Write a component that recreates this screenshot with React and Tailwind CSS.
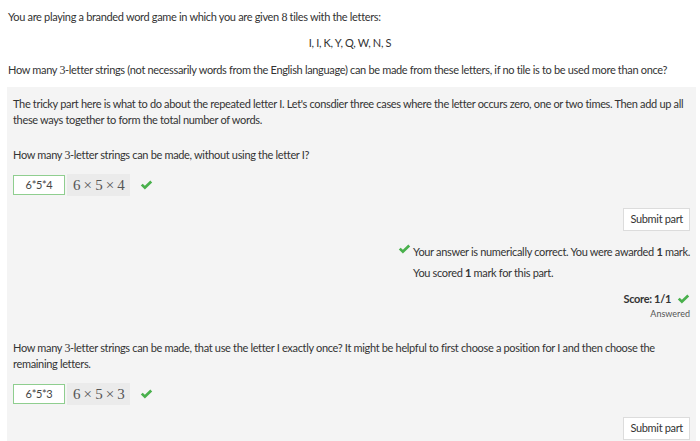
const Check = ({ className = '' }) => (
  <svg viewBox="0 0 16 12" className={className} aria-hidden="true">
    <path d="M1 6.6 L3.3 4.4 L6 7 L12.7 0.6 L15 2.8 L6 11.4 Z" fill="#49b04c" />
  </svg>
);

const AnswerRow = ({ raw, math }) => (
  <div className="flex items-center">
    <div className="w-[52px] h-[20px] border border-[#8fce8f] bg-white text-[11px] text-[#444] flex items-center justify-center">
      {raw}
    </div>
    <div className="ml-[2px] h-[22px] px-[6px] bg-[#ebebeb] flex items-center text-[15px] text-[#555] font-['Liberation_Serif',serif]">
      {math}
    </div>
    <Check className="ml-[10px] w-[13px] h-[10px]" />
  </div>
);

const SubmitButton = () => (
  <div className="flex justify-end">
    <button className="h-[23px] px-[6px] bg-white border border-[#dcdcdc] text-[11px] text-[#333]">
      Submit part
    </button>
  </div>
);

export default function App() {
  return (
    <div className="w-[700px] h-[441px] overflow-hidden bg-white text-[#333] text-[11px] tracking-[-0.33px] font-['Lato',sans-serif]">
      <div className="px-[8px] pt-[10px]">
        <p className="leading-[14px]">
          You are playing a branded word game in which you are given <span className="font-['Liberation_Serif',serif] text-[12px]">8</span> tiles with the letters:
        </p>
        <p className="mt-[12px] text-center leading-[14px]">I, I, K, Y, Q, W, N, S</p>
        <p className="mt-[13px] leading-[14px]">
          How many <span className="font-['Liberation_Serif',serif] text-[12px]">3</span>-letter strings (not necessarily words from the English language) can be made from these letters, if no tile is to be used more than once?
        </p>
      </div>

      <div className="ml-[7px] mr-[4px] mt-[10px] bg-[#f4f4f4] pl-[6px] pr-[5px] pt-[9px] pb-[10px]">
        <p className="leading-[16px]">
          The tricky part here is what to do about the repeated letter I. Let's consdier three cases where the letter occurs zero, one or two times. Then add up all these ways together to form the total number of words.
        </p>

        <p className="mt-[19px] leading-[16px]">
          How many <span className="font-['Liberation_Serif',serif] text-[12px]">3</span>-letter strings can be made, without using the letter I?
        </p>
        <div className="mt-[11px]">
          <AnswerRow raw="6*5*4" math="6 × 5 × 4" />
        </div>

        <div className="mt-[12px] pr-[1px]">
          <SubmitButton />
        </div>

        <div className="mt-[10px] flex justify-end pr-[1px]">
          <div className="flex">
            <Check className="mt-[3px] w-[13px] h-[10px]" />
            <div className="ml-[2px] leading-[21px]">
              <p>
                Your answer is numerically correct. You were awarded <b>1</b> mark.
              </p>
              <p>
                You scored <b>1</b> mark for this part.
              </p>
            </div>
          </div>
        </div>

        <div className="mt-[9px] flex flex-col items-end pr-[1px]">
          <div className="flex items-center font-bold leading-[14px]">
            Score: 1/1
            <Check className="ml-[6px] w-[13px] h-[10px]" />
          </div>
          <p className="mt-[2px] text-[9px] leading-[12px] text-[#555] tracking-normal">Answered</p>
        </div>

        <p className="mt-[20px] leading-[16px]">
          How many <span className="font-['Liberation_Serif',serif] text-[12px]">3</span>-letter strings can be made, that use the letter I exactly once? It might be helpful to first choose a position for I and then choose the remaining letters.
        </p>
        <div className="mt-[11px]">
          <AnswerRow raw="6*5*3" math="6 × 5 × 3" />
        </div>
        <div className="mt-[12px] pr-[1px]">
          <SubmitButton />
        </div>
      </div>
    </div>
  );
}
